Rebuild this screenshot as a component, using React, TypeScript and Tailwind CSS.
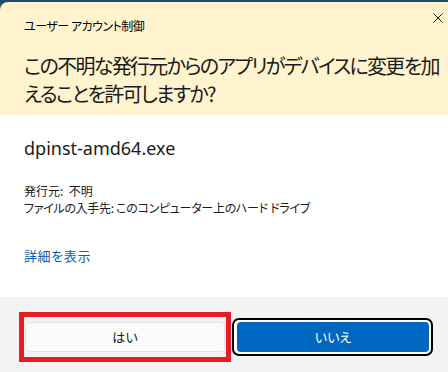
export default function App() {
  return (
    <div className="w-[448px] h-[372px] bg-[#1d4e6c] pt-[2px] overflow-hidden">
      <div className="flex flex-col h-[370px] rounded-tl-[8px] overflow-hidden font-['Noto_Sans_CJK_JP',sans-serif] [font-feature-settings:'palt']">
        {/* header */}
        <div className="relative h-[113px] bg-[#fff4ce] px-6 pt-4">
          <div className="text-[12px] leading-[16px] text-black tracking-[-0.5px]">ユーザー アカウント制御</div>
          <button className="absolute right-[5px] top-[11px] w-[10px] h-[10px]" aria-label="閉じる">
            <svg viewBox="0 0 10 10" className="w-[10px] h-[10px]">
              <path d="M0.5 0.5 L9.5 9.5 M9.5 0.5 L0.5 9.5" stroke="#1a1a1a" strokeWidth="1" fill="none" />
            </svg>
          </button>
          <h1 className="mt-[18px] text-[20px] leading-[28px] font-normal text-[#1a1a1a] tracking-[-1.7px] whitespace-nowrap">
            この不明な発行元からのアプリがデバイスに変更を加
            <br />
            えることを許可しますか?
          </h1>
        </div>

        {/* body */}
        <div className="h-[182px] bg-white px-6 pt-[21px]">
          <div className="font-['Noto_Sans',sans-serif] text-[18px] leading-[24px] text-[#1a1a1a]">dpinst-amd64.exe</div>
          <div className="mt-[22px] text-[12px] leading-[17px] text-[#1a1a1a] whitespace-nowrap">
            <p>発行元:&nbsp; 不明</p>
            <p className="tracking-[-0.3px]">ファイルの入手先: このコンピューター上のハード ドライブ</p>
          </div>
          <a href="#" className="block mt-[31px] text-[13px] leading-[17px] tracking-[0.6px] text-[#0b5cad]">詳細を表示</a>
        </div>

        {/* footer */}
        <div className="relative flex-1 bg-[#f3f3f3] pl-[25px] pt-[21px] flex items-start">
          <button className="mt-[4px] w-[200px] h-[30px] rounded-[4px] border border-[#e3e3e3] bg-[#fbfbfb] text-[13px] text-[#1a1a1a]">
            はい
          </button>
          <div className="ml-[7px] w-[201px] h-[38px] rounded-[7px] border-2 border-black bg-white pl-[3px] pt-[2px]">
            <button className="w-[192px] h-[30px] rounded-[4px] bg-[#0067c0] text-[13px] text-white">いいえ</button>
          </div>
          <div className="absolute left-[19px] top-[15px] w-[212px] h-[50px] border-[5px] border-[#e81c24] pointer-events-none" />
        </div>
      </div>
    </div>
  );
}
